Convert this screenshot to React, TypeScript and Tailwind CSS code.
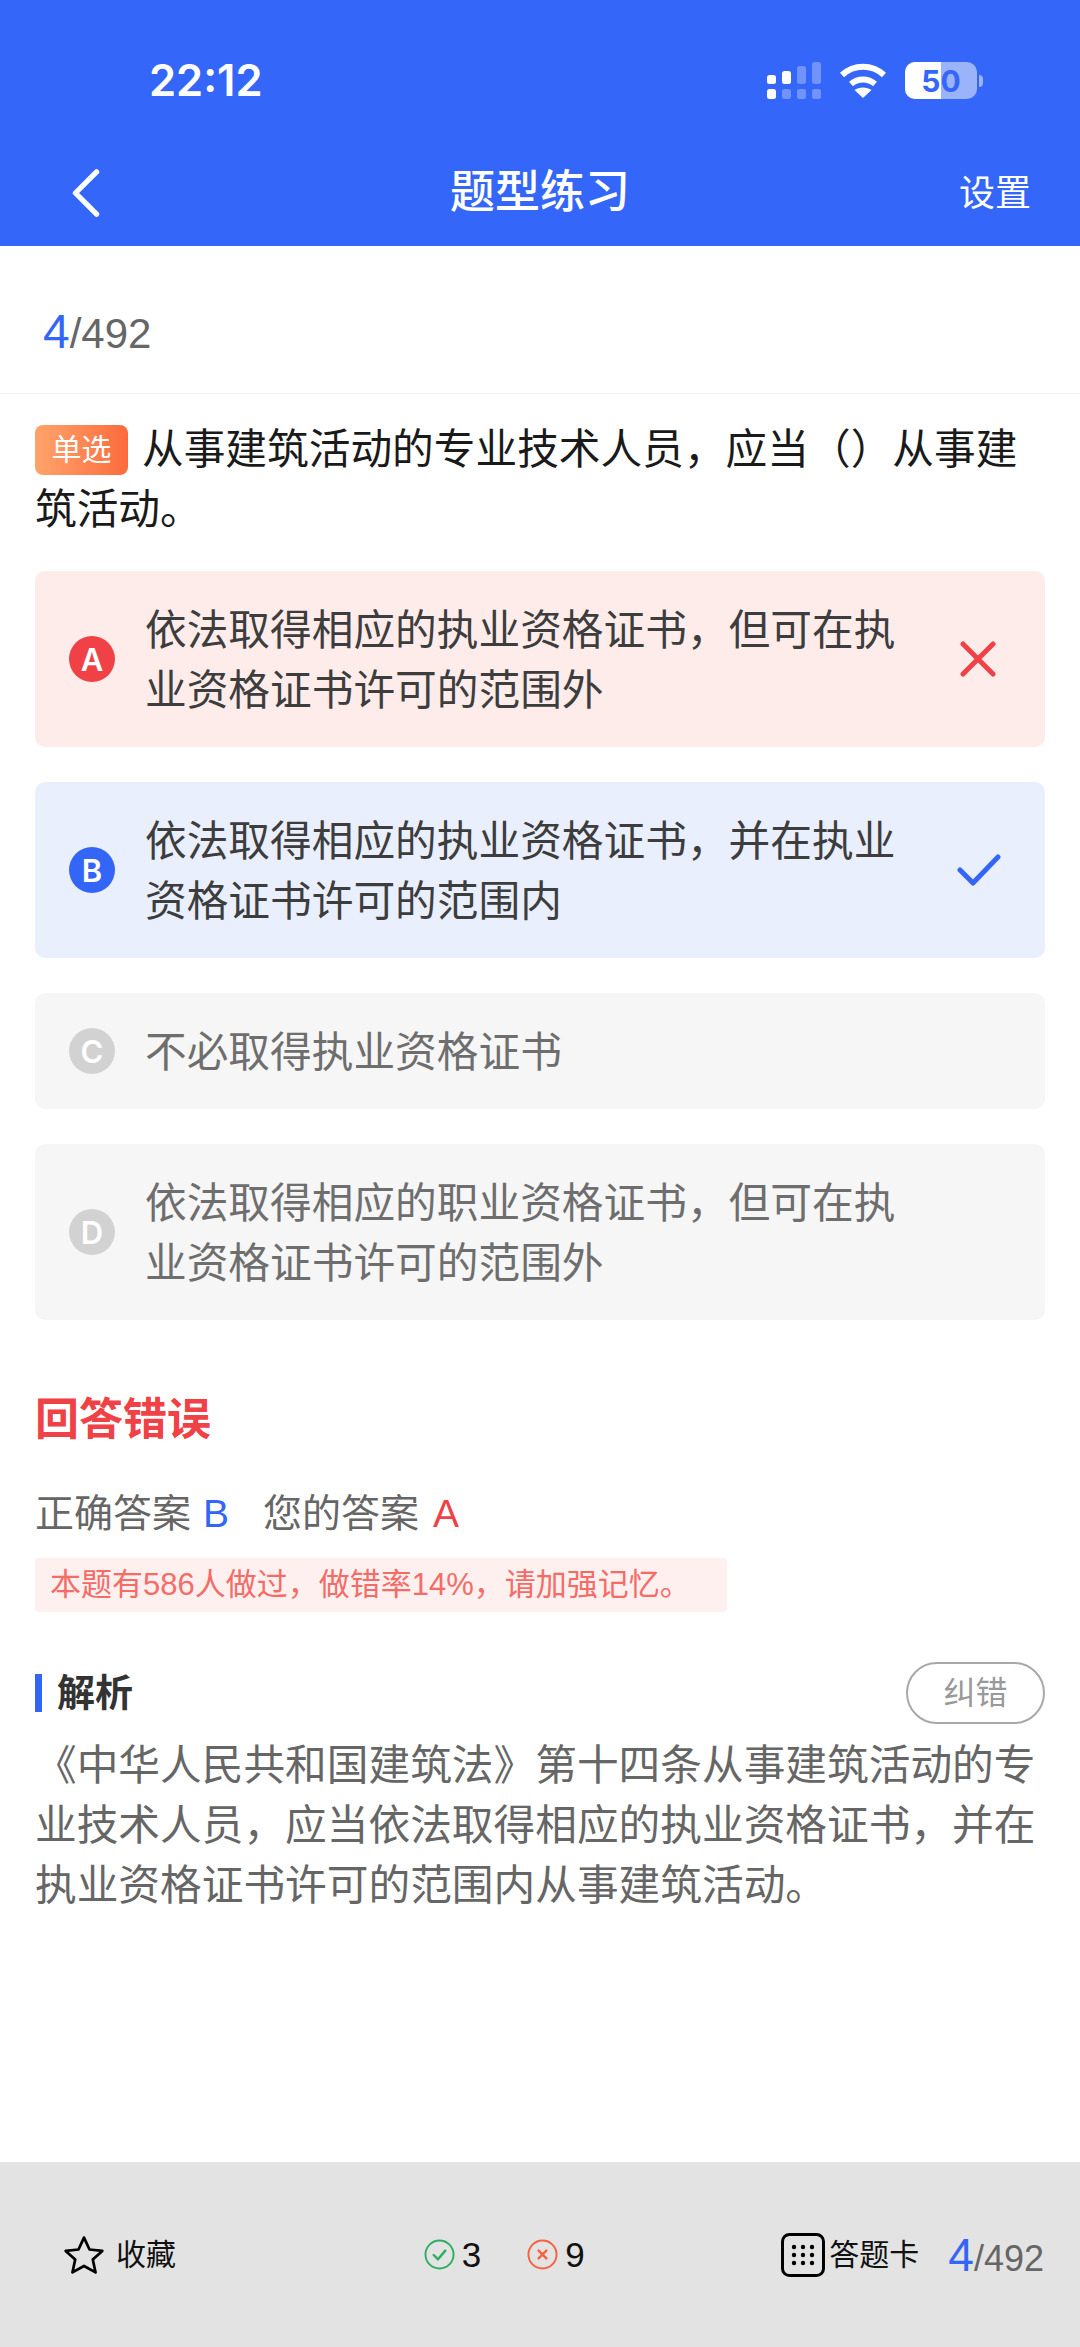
import React from "react";

function Option({ letter, lines, tone, right }: { letter: string; lines: string[]; tone: "red" | "blue" | "gray"; right?: React.ReactNode }) {
  const bg = tone === "red" ? "bg-[#feeceb]" : tone === "blue" ? "bg-[#e9effd]" : "bg-[#f6f6f6]";
  const dot = tone === "red" ? "bg-[#ef4146]" : tone === "blue" ? "bg-[#3366f6]" : "bg-[#d2d2d2]";
  const text = tone === "gray" ? "text-[#6e6e6e]" : "text-[#3d3d3d]";
  return (
    <div className={`flex items-center rounded-[10px] ${bg} pl-[34px] pr-[47px] py-[28px]`}>
      <div className={`flex h-[46px] w-[46px] shrink-0 items-center justify-center rounded-full ${dot} font-['Inter',sans-serif] text-[31px] font-semibold leading-none text-white`}>{letter}</div>
      <div className={`ml-[30px] flex-1 translate-y-[2px] text-[41.7px] leading-[60px] ${text}`}>
        {lines.map((l) => (
          <div key={l} className="whitespace-nowrap">{l}</div>
        ))}
      </div>
      {right}
    </div>
  );
}

function Progress({ className, big, small }: { className?: string; big: string; small: string }) {
  return (
    <div className={`flex items-baseline leading-none ${className ?? ""}`}>
      <span className={`${big} text-[#3366f6]`}>4</span>
      <span className={`${small} text-[#666]`}>/492</span>
    </div>
  );
}

export default function App() {
  return (
    <div className="flex h-[2347px] w-[1080px] flex-col bg-white font-['Liberation_Sans','Noto_Sans_CJK_SC',sans-serif]">
      <header className="flex h-[246px] shrink-0 flex-col bg-[#3366f9] text-white">
        <div className="flex h-[160px] items-center justify-between pl-[149px] pr-[97px] pt-[1px]">
          <span className="font-['Inter',sans-serif] text-[43.500px] font-semibold leading-none">22:12</span>
          <div className="flex items-center">
            <svg width="54" height="38" viewBox="0 0 54 38" fill="#fff">
              <rect x="0" y="13" width="9" height="9" rx="2.5" />
              <rect x="15" y="9" width="9" height="13" rx="2.5" />
              <rect x="30" y="4" width="9" height="18" rx="2.5" opacity=".3" />
              <rect x="45" y="0" width="9" height="22" rx="2.5" opacity=".3" />
              <rect x="0" y="27" width="9" height="10" rx="2.5" />
              <rect x="15" y="27" width="9" height="10" rx="2.5" opacity=".3" />
              <rect x="30" y="27" width="9" height="10" rx="2.5" opacity=".3" />
              <rect x="45" y="27" width="9" height="10" rx="2.5" opacity=".3" />
            </svg>
            <svg className="ml-[18px]" width="48" height="36" viewBox="0 0 48 36" fill="none" stroke="#fff" strokeWidth="6">
              <path d="M3 12C15 1 33 1 45 12" />
              <path d="M12 21C19 15 29 15 36 21" />
              <path d="M24 35L15.5 27C20 23.5 28 23.5 32.500 27Z" fill="#fff" stroke="none" />
            </svg>
            <div className="relative ml-[18px] flex h-[37px] w-[72px] items-center justify-center overflow-hidden rounded-[10px] bg-[#9ab3fb]">
              <div className="absolute inset-y-0 left-0 w-[36px] bg-white" />
              <span className="relative font-['Inter',sans-serif] text-[30px] font-bold leading-none text-[#3366f9]">50</span>
            </div>
            <div className="ml-[2px] h-[12px] w-[4px] rounded-r-full bg-[#9ab3fb]" />
          </div>
        </div>
        <div className="relative flex flex-1 items-center justify-center pb-[22px]">
          <svg className="absolute left-[71px] top-[9px]" width="30" height="48" viewBox="0 0 30 50" fill="none" stroke="#fff" strokeWidth="5.500" strokeLinecap="round" strokeLinejoin="round">
            <path d="M26 3L4 25L26 47" />
          </svg>
          <span className="text-[45px] font-medium leading-none">题型练习</span>
          <span className="absolute right-[49px] top-[16px] text-[36px] leading-none">设置</span>
        </div>
      </header>

      <div className="flex h-[148px] shrink-0 items-center border-b border-[#f3f3f3] pl-[43px] pt-[24px]">
        <Progress big="text-[48px]" small="text-[42px]" />
      </div>

      <main className="flex flex-1 flex-col px-[35px]">
        <div className="mt-[26px] text-[41.7px] leading-[60px] text-[#1a1a1a]">
          <span className="mr-[14px] inline-block h-[50px] w-[93px] rounded-[8px] bg-gradient-to-r from-[#ffa36b] to-[#fb6a3c] text-center align-[4px] text-[30px] leading-[50px] text-white">单选</span>
          从事建筑活动的专业技术人员，应当（）从事建
          <br />
          筑活动。
        </div>

        <div className="mt-[31px] flex flex-col gap-[35px]">
          <Option
            letter="A"
            tone="red"
            lines={["依法取得相应的执业资格证书，但可在执", "业资格证书许可的范围外"]}
            right={
              <svg className="mr-[2px]" width="36" height="36" viewBox="0 0 36 36" fill="none" stroke="#ef4146" strokeWidth="5" strokeLinecap="round">
                <path d="M3 3L33 33M33 3L3 33" />
              </svg>
            }
          />
          <Option
            letter="B"
            tone="blue"
            lines={["依法取得相应的执业资格证书，并在执业", "资格证书许可的范围内"]}
            right={
              <svg className="-mr-[3px]" width="44" height="32" viewBox="0 0 44 32" fill="none" stroke="#3366f6" strokeWidth="5" strokeLinecap="round" strokeLinejoin="round">
                <path d="M3 16L16 29L41 3" />
              </svg>
            }
          />
          <Option letter="C" tone="gray" lines={["不必取得执业资格证书"]} />
          <Option letter="D" tone="gray" lines={["依法取得相应的职业资格证书，但可在执", "业资格证书许可的范围外"]} />
        </div>

        <div className="mt-[78px] text-[44px] font-bold leading-none text-[#ef4146]">回答错误</div>

        <div className="mt-[52px] flex items-baseline text-[39px] leading-none text-[#666]">
          <span>正确答案</span>
          <span className="ml-[12px] text-[#3366f6]">B</span>
          <span className="ml-[34px]">您的答案</span>
          <span className="ml-[14px] text-[#ef4146]">A</span>
        </div>

        <div className="mt-[25px] flex h-[54px] w-[692px] items-center rounded-[4px] bg-[#fff0f0] pl-[15px] text-[31px] text-[#f56b66]">
          本题有586人做过，做错率14%，请加强记忆。
        </div>

        <div className="mt-[51px] flex h-[60px] items-center justify-between">
          <div className="flex items-center">
            <div className="h-[38px] w-[7px] bg-[#3366f6]" />
            <span className="ml-[15px] text-[38px] font-bold leading-none text-[#333]">解析</span>
          </div>
          <div className="flex h-[62px] w-[139px] items-center justify-center rounded-full border-2 border-[#a8a8a8] text-[32px] text-[#999]">纠错</div>
        </div>

        <div className="mt-[13px] text-[41.7px] leading-[60px] text-[#666]">
          <div className="whitespace-nowrap">《中华人民共和国建筑法》第十四条从事建筑活动的专</div>
          <div className="whitespace-nowrap">业技术人员，应当依法取得相应的执业资格证书，并在</div>
          <div className="whitespace-nowrap">执业资格证书许可的范围内从事建筑活动。</div>
        </div>
      </main>

      <footer className="flex h-[185px] shrink-0 items-center justify-between bg-[#e3e3e3] pl-[62px] pr-[36px] text-[30px] text-[#111]">
        <div className="flex items-center">
          <svg width="44" height="44" viewBox="0 0 24 24" fill="none" stroke="#000" strokeWidth="1.500" strokeLinejoin="round">
            <path d="M12 2.500L15 9L22 9.800L16.800 14.500L18.300 21.500L12 18L5.700 21.500L7.200 14.500L2 9.800L9 9Z" />
          </svg>
          <span className="ml-[10px]">收藏</span>
        </div>
        <div className="ml-[51px] flex items-center">
          <svg width="31" height="31" viewBox="0 0 32 32" fill="none" stroke="#2fae62" strokeWidth="2" strokeLinecap="round" strokeLinejoin="round">
            <circle cx="16" cy="16" r="14.500" />
            <path d="M10 16.500L14.500 21L22 12" strokeWidth="2.500" />
          </svg>
          <span className="ml-[7px] text-[35px] leading-none">3</span>
          <svg className="ml-[46px]" width="31" height="31" viewBox="0 0 32 32" fill="none" stroke="#f4623f" strokeWidth="2" strokeLinecap="round">
            <circle cx="16" cy="16" r="14.500" />
            <path d="M12 12L20 20M20 12L12 20" strokeWidth="2.500" />
          </svg>
          <span className="ml-[7px] text-[35px] leading-none">9</span>
        </div>
        <div className="flex items-center">
          <svg width="44" height="44" viewBox="0 0 44 44" fill="none">
            <rect x="1.500" y="1.500" width="41" height="41" rx="7" stroke="#000" strokeWidth="3" />
            <g fill="#000">
              <circle cx="13" cy="14" r="2.200" /><circle cx="22" cy="14" r="2.200" /><circle cx="31" cy="14" r="2.200" />
              <circle cx="13" cy="22" r="2.200" /><circle cx="22" cy="22" r="2.200" /><circle cx="31" cy="22" r="2.200" />
              <circle cx="13" cy="30" r="2.200" /><circle cx="22" cy="30" r="2.200" /><circle cx="31" cy="30" r="2.200" />
            </g>
          </svg>
          <span className="ml-[4px]">答题卡</span>
          <Progress className="ml-[29px]" big="text-[46px]" small="text-[36px]" />
        </div>
      </footer>
    </div>
  );
}
